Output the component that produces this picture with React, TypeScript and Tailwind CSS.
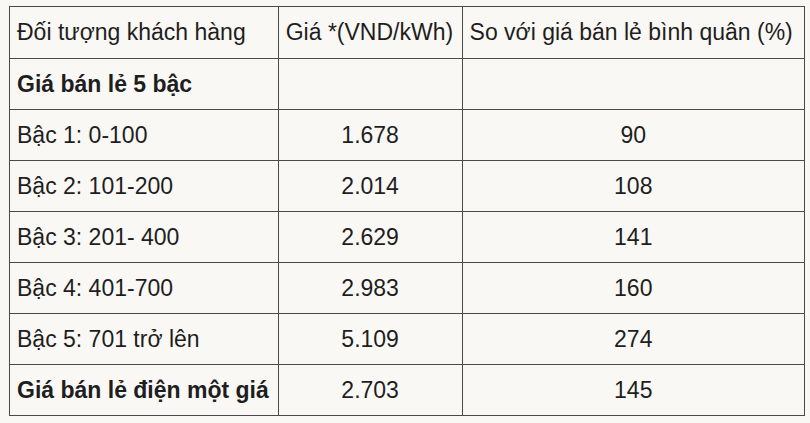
const rows: [string, string, string, boolean][] = [
  ["Giá bán lẻ 5 bậc", "", "", true],
  ["Bậc 1: 0-100", "1.678", "90", false],
  ["Bậc 2: 101-200", "2.014", "108", false],
  ["Bậc 3: 201- 400", "2.629", "141", false],
  ["Bậc 4: 401-700", "2.983", "160", false],
  ["Bậc 5: 701 trở lên", "5.109", "274", false],
  ["Giá bán lẻ điện một giá", "2.703", "145", true],
];

export default function App() {
  return (
    <div className="h-[423px] w-[810px] bg-[#faf8f5] pl-[9px] pt-[6px] font-['Liberation_Sans',Arial,sans-serif] text-[23px] text-[#1e1e1e]">
      <table className="w-[796px] border-collapse border border-[#4a4a4a]">
        <colgroup>
          <col className="w-[269px]" />
          <col className="w-[184px]" />
          <col className="w-[343px]" />
        </colgroup>
        <thead>
          <tr className="h-[52px]">
            <td className="border border-[#4a4a4a] px-[7px] align-middle whitespace-nowrap">Đối tượng khách hàng</td>
            <td className="border border-[#4a4a4a] px-[7px] align-middle whitespace-nowrap">Giá *(VND/kWh)</td>
            <td className="border border-[#4a4a4a] px-[7px] align-middle whitespace-nowrap">So với giá bán lẻ bình quân (%)</td>
          </tr>
        </thead>
        <tbody>
          {rows.map(([label, price, pct, bold]) => (
            <tr key={label} className="h-[51px]">
              <td className={`border border-[#4a4a4a] px-[7px] whitespace-nowrap ${bold ? "font-bold" : ""}`}>{label}</td>
              <td className="border border-[#4a4a4a] px-[7px] text-center">{price}</td>
              <td className="border border-[#4a4a4a] px-[7px] text-center">{pct}</td>
            </tr>
          ))}
        </tbody>
      </table>
    </div>
  );
}
